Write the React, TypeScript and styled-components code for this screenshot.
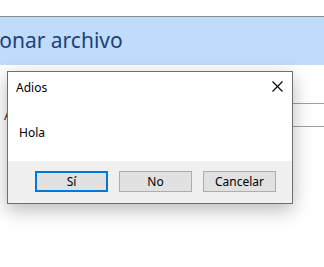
import React from 'react';
import styled, { createGlobalStyle } from 'styled-components';

const GlobalStyle = createGlobalStyle`
  html, body {
    margin: 0;
    padding: 0;
    background: #ffffff;
    overflow: hidden;
  }
  body {
    font-family: 'Noto Sans', 'Open Sans', sans-serif;
  }
`;

export default function App() {
  return (
    <>
      <GlobalStyle />
      <Page>
        <TopSpace />
        <Banner>
          <BannerTitle>Seleccionar archivo</BannerTitle>
        </Banner>
        <FieldRow>
          <FieldLabel>Archivo</FieldLabel>
          <FieldBox />
        </FieldRow>

        <Dialog>
          <TitleBar>
            <DialogTitle>Adios</DialogTitle>
            <CloseButton aria-label="Cerrar">
              <svg width="11" height="11" viewBox="0 0 11 11">
                <path d="M0.5 0.5 L10.5 10.5 M10.5 0.5 L0.5 10.5" stroke="#000" strokeWidth="1.1" fill="none" />
              </svg>
            </CloseButton>
          </TitleBar>
          <Body>
            <Message>Hola</Message>
          </Body>
          <Footer>
            <DialogButton primary>Sí</DialogButton>
            <DialogButton>No</DialogButton>
            <DialogButton>Cancelar</DialogButton>
          </Footer>
        </Dialog>
      </Page>
    </>
  );
}

const Page = styled.div`
  position: relative;
  width: 324px;
  height: 267px;
  overflow: hidden;
  display: flex;
  flex-direction: column;
`;

const TopSpace = styled.div`
  height: 16px;
  border-bottom: 1px solid #8c8c8c;
`;

const Banner = styled.div`
  height: 48px;
  background-color: #c0dcfc;
  display: flex;
  align-items: center;
  overflow: hidden;
  white-space: nowrap;
`;

const BannerTitle = styled.h1`
  margin: 0 0 0 -67px;
  font-family: 'Noto Sans', 'Open Sans', sans-serif;
  font-weight: 400;
  font-size: 21px;
  color: #22407a;
  line-height: 1;
  padding-bottom: 1px;
`;

const FieldRow = styled.div`
  display: flex;
  align-items: center;
  margin-top: 38px;
  height: 24px;
`;

const FieldLabel = styled.span`
  width: 80px;
  padding-left: 4px;
  font-size: 13px;
  color: #222222;
`;

const FieldBox = styled.div`
  flex: 1;
  height: 22px;
  border-top: 1px solid #a0a0a0;
  border-bottom: 1px solid #a0a0a0;
`;

const Dialog = styled.div`
  position: absolute;
  left: 7px;
  top: 71px;
  width: 284px;
  height: 131px;
  border: 1px solid #6f6f6f;
  background: #ffffff;
  box-shadow: 0 6px 18px rgba(0, 0, 0, 0.28);
  display: flex;
  flex-direction: column;
`;

const TitleBar = styled.div`
  height: 30px;
  display: flex;
  align-items: center;
  justify-content: space-between;
  padding: 0 9px 0 8px;
`;

const DialogTitle = styled.span`
  font-size: 12px;
  color: #000000;
`;

const CloseButton = styled.div`
  width: 11px;
  height: 11px;
  display: flex;
  margin-top: -1px;
`;

const Body = styled.div`
  flex: 1;
  display: flex;
  align-items: center;
  padding-left: 11px;
  padding-top: 2px;
`;

const Message = styled.span`
  font-size: 12px;
  color: #000000;
`;

const Footer = styled.div`
  height: 42px;
  background-color: #f0f0f0;
  display: flex;
  justify-content: flex-end;
  align-items: flex-start;
  gap: 11px;
  padding: 10px 16px 0 0;
  box-sizing: border-box;
`;

const DialogButton = styled.button<{ primary?: boolean }>`
  width: 73px;
  height: 21px;
  box-sizing: border-box;
  background-color: #e1e1e1;
  border: ${(props) => (props.primary ? '2px solid #0078d7' : '1px solid #adadad')};
  border-radius: 0;
  padding: 0;
  font-family: 'Noto Sans', 'Open Sans', sans-serif;
  font-size: 12px;
  color: #000000;
  line-height: 1;
`;
